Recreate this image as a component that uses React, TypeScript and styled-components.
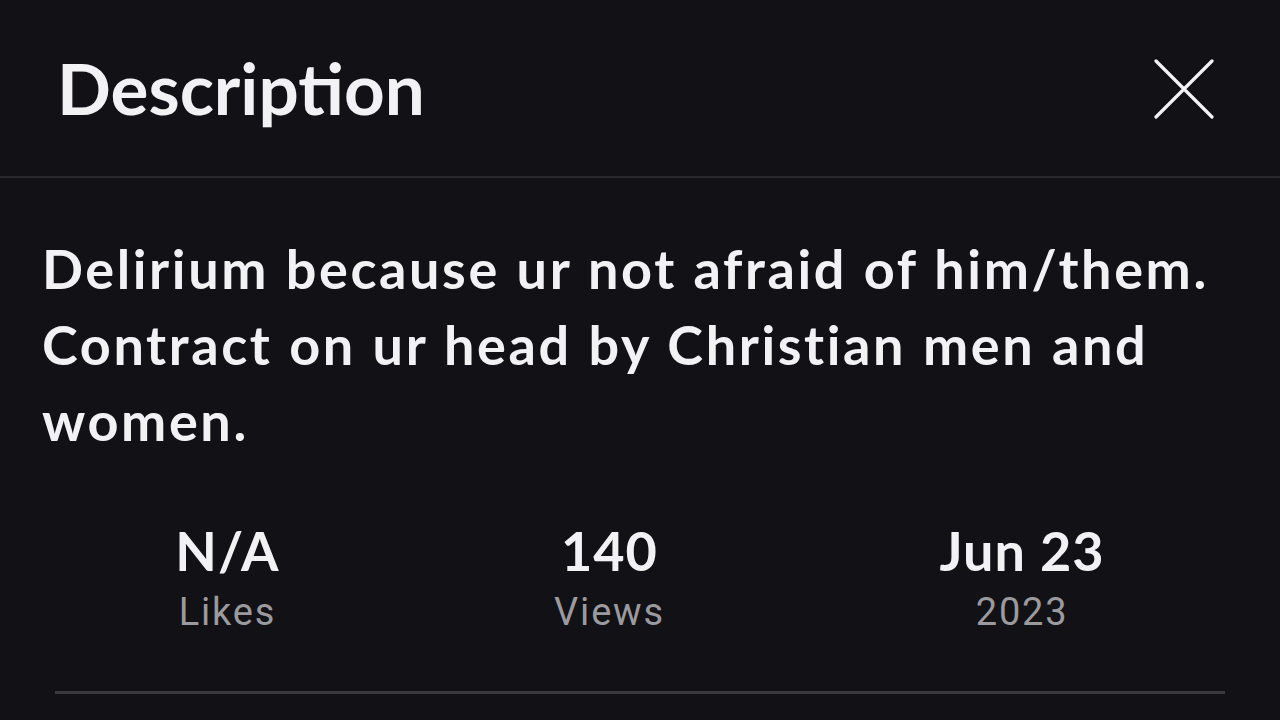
import React from 'react';
import styled, { createGlobalStyle } from 'styled-components';

const GlobalStyle = createGlobalStyle`
  html, body {
    margin: 0;
    padding: 0;
    background: #121115;
  }
  body {
    font-family: Lato, "Noto Sans", sans-serif;
    color: #f2f2f4;
  }
`;

const Sheet = styled.div`
  width: 1280px;
  height: 720px;
  overflow: hidden;
  background: #121115;
`;

const Header = styled.header`
  height: 176px;
  display: flex;
  align-items: center;
  justify-content: space-between;
  padding: 0 66px 0 57px;
  border-bottom: 2px solid #2a292d;
`;

const Title = styled.h1`
  margin: 0;
  font-family: Lato, sans-serif;
  font-weight: 700;
  font-size: 71px;
  line-height: 1;
  color: #f2f2f4;
  padding-bottom: 2px;
`;

const CloseButton = styled.button`
  background: none;
  border: none;
  padding: 0;
  width: 60px;
  height: 60px;
  display: flex;
  align-items: center;
  justify-content: center;
  color: #f4f4f6;
  cursor: pointer;
  margin-top: 2px;
`;

const Body = styled.section`
  padding: 53px 42px 0 42px;
`;

const DescriptionText = styled.p`
  margin: 0;
  font-family: Lato, sans-serif;
  font-weight: 700;
  font-size: 54px;
  line-height: 76px;
  letter-spacing: 2.6px;
  word-spacing: 1px;
  color: #f2f2f4;
  max-width: 1196px;
`;

const Stats = styled.div`
  display: flex;
  justify-content: space-around;
  padding: 0 38px;
  margin-top: 60px;
`;

const Stat = styled.div`
  display: flex;
  flex-direction: column;
  align-items: center;
`;

const StatValue = styled.div`
  font-family: Lato, sans-serif;
  font-weight: 700;
  font-size: 54px;
  line-height: 1.2;
  letter-spacing: 1px;
  color: #f2f2f4;
`;

const StatLabel = styled.div`
  font-family: Roboto, sans-serif;
  font-weight: 400;
  font-size: 38px;
  line-height: 1.2;
  letter-spacing: 1.8px;
  margin-top: 6px;
  color: #9b9a9f;
`;

const Divider = styled.hr`
  margin: 56px 55px 0;
  border: none;
  height: 3px;
  background: #3a393d;
`;

const stats = [
  { value: 'N/A', label: 'Likes' },
  { value: '140', label: 'Views' },
  { value: 'Jun 23', label: '2023' },
];

const CloseIcon = () => (
  <svg width="60" height="60" viewBox="0 0 60 60" fill="none">
    <path d="M2 2L58 58M58 2L2 58" stroke="currentColor" strokeWidth="3.2" strokeLinecap="round" />
  </svg>
);

const App: React.FC = () => (
  <Sheet>
    <GlobalStyle />
    <Header>
      <Title>Description</Title>
      <CloseButton aria-label="Close">
        <CloseIcon />
      </CloseButton>
    </Header>
    <Body>
      <DescriptionText>
        Delirium because ur not afraid of him/them. Contract on ur head by Christian men and women.
      </DescriptionText>
    </Body>
    <Stats>
      {stats.map((s) => (
        <Stat key={s.label}>
          <StatValue>{s.value}</StatValue>
          <StatLabel>{s.label}</StatLabel>
        </Stat>
      ))}
    </Stats>
    <Divider />
  </Sheet>
);

export default App;
